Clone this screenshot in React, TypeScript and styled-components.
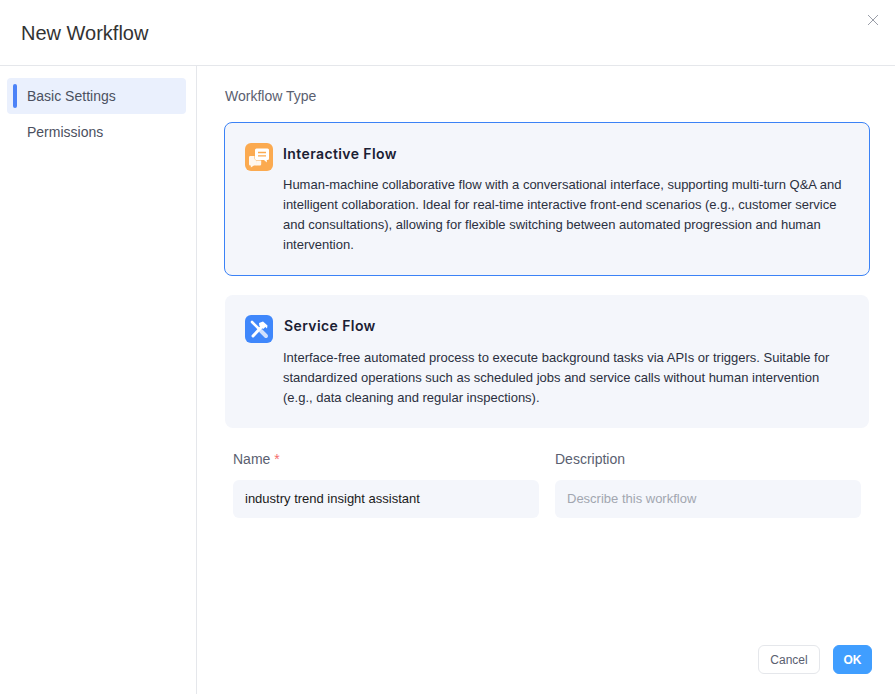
import React from "react";
import styled, { createGlobalStyle } from "styled-components";

const SANS = `"Liberation Sans", Arial, sans-serif`;

const Global = createGlobalStyle`
  html, body { margin: 0; padding: 0; background: #fff; }
  body { font-family: ${SANS}; }
  * { box-sizing: border-box; }
`;

const Dialog = styled.div`
  width: 895px;
  height: 694px;
  display: flex;
  flex-direction: column;
  position: relative;
  overflow: hidden;
  background: #fff;
`;

const Header = styled.header`
  height: 66px;
  flex: none;
  border-bottom: 1px solid #e5e7eb;
  padding: 21px 0 0 21px;
`;

const Title = styled.h1`
  margin: 0;
  font: 400 20px/24px ${SANS};
  color: #333;
`;

const Close = styled.button`
  position: absolute;
  top: 14px;
  right: 16px;
  width: 12px;
  height: 12px;
  padding: 0;
  border: 0;
  background: none;
  display: flex;
`;

const Body = styled.div`
  flex: 1;
  display: flex;
  min-height: 0;
`;

const Side = styled.nav`
  width: 197px;
  flex: none;
  border-right: 1px solid #e5e7eb;
  padding: 12px 10px 0 7px;
  display: flex;
  flex-direction: column;
`;

const NavItem = styled.div<{ $active?: boolean }>`
  height: 36px;
  position: relative;
  display: flex;
  align-items: center;
  padding-left: 20px;
  font: 400 14px/20px ${SANS};
  color: #4b5060;
  border-radius: 4px;
  background: ${(p) => (p.$active ? "#eaf0fd" : "transparent")};
  ${(p) =>
    p.$active &&
    `&::before {
      content: "";
      position: absolute;
      left: 6px;
      top: 6px;
      width: 4px;
      height: 24px;
      border-radius: 2px;
      background: #4c82f7;
    }`}
`;

const Main = styled.main`
  flex: 1;
  min-width: 0;
  padding: 22px 26px 0 28px;
  display: flex;
  flex-direction: column;
`;

const SectionLabel = styled.div`
  font: 400 14px/16px ${SANS};
  color: #5a6070;
  margin-bottom: 18px;
`;

const Card = styled.div<{ $selected?: boolean }>`
  background: #f4f6fb;
  border-radius: 8px;
  border: ${(p) => (p.$selected ? "1px solid #3b82f6" : "0")};
  padding: 20px 20px 0 20px;
  height: ${(p) => (p.$selected ? 154 : 133)}px;
  margin: ${(p) => (p.$selected ? "0 0 19px -1px" : "0")};
  width: ${(p) => (p.$selected ? 646 : 644)}px;
`;

const CardHead = styled.div<{ $gap: number }>`
  display: flex;
  align-items: flex-start;
  gap: ${(p) => p.$gap}px;
  height: 28px;
`;

const IconBox = styled.div<{ $tone: string }>`
  width: 28px;
  height: 28px;
  border-radius: 6px;
  background: ${(p) => p.$tone};
  display: flex;
  flex: none;
`;

const CardTitle = styled.div`
  font: 600 14px/22px Inter, ${SANS};
  letter-spacing: 0.4px;
  color: #1a2033;
`;

const CardText = styled.p<{ $top: number }>`
  margin: ${(p) => p.$top}px 0 0 38px;
  font: 400 13px/20px ${SANS};
  color: #2b3040;
`;

const FormRow = styled.div`
  display: grid;
  grid-template-columns: 306px 306px;
  gap: 16px;
  margin: 22px 0 0 8px;
`;

const Field = styled.div`
  display: flex;
  flex-direction: column;
`;

const Label = styled.label`
  font: 400 14px/18px ${SANS};
  color: #5a6070;
  margin-bottom: 12px;
`;

const Star = styled.span`
  color: #f56c6c;
  margin-left: 4px;
`;

const Input = styled.input`
  height: 38px;
  border: 0;
  outline: 0;
  border-radius: 6px;
  background: #f4f6fb;
  padding: 0 12px 2px;
  font: 400 13px ${SANS};
  color: #1a1a1a;
  &::placeholder { color: #a2a6b0; opacity: 1; }
`;

const Footer = styled.div`
  position: absolute;
  right: 23px;
  bottom: 20px;
  display: flex;
  gap: 13px;
`;

const Btn = styled.button<{ $primary?: boolean }>`
  height: 29px;
  padding: 0;
  width: ${(p) => (p.$primary ? 39 : 62)}px;
  border-radius: 6px;
  border: 1px solid ${(p) => (p.$primary ? "#409eff" : "#e5e7eb")};
  background: ${(p) => (p.$primary ? "#409eff" : "#fff")};
  color: ${(p) => (p.$primary ? "#fff" : "#5a6070")};
  font: ${(p) => (p.$primary ? 700 : 400)} 12px ${SANS};
`;

export default function App() {
  return (
    <Dialog>
      <Global />
      <Header>
        <Title>New Workflow</Title>
      </Header>
      <Close aria-label="close">
        <svg width="12" height="12" viewBox="0 0 12 12">
          <path d="M1 1l10 10M11 1L1 11" stroke="#9a9ea8" strokeWidth="1" fill="none" />
        </svg>
      </Close>
      <Body>
        <Side>
          <NavItem $active>Basic Settings</NavItem>
          <NavItem>Permissions</NavItem>
        </Side>
        <Main>
          <SectionLabel>Workflow Type</SectionLabel>
          <Card $selected>
            <CardHead $gap={10}>
              <IconBox $tone="#fbaa50">
                <svg width="28" height="28" viewBox="0 0 28 28">
                  <path d="M5.2 13h6v9.5H9L5.8 24.6V22.5h-.6A1.2 1.2 0 0 1 4 21.3v-7.1A1.2 1.2 0 0 1 5.2 13z" fill="#fff" opacity=".9" />
                  <path d="M11.2 16h5v5.3a1.2 1.2 0 0 1-1.2 1.2h-4z" fill="#fff" opacity=".9" />
                  <path d="M11.5 5.5h11A1.5 1.5 0 0 1 24 7v8.5a1.5 1.5 0 0 1-1.5 1.5h-.7v2.4L19 17h-7.5a1.5 1.5 0 0 1-1.5-1.5V7a1.5 1.5 0 0 1 1.5-1.5z" fill="#fff" stroke="#fbaa50" strokeWidth="1" paintOrder="stroke" />
                  <path d="M13 9.5h8M13 12.8h8" stroke="#fbaa50" strokeWidth="1.3" />
                </svg>
              </IconBox>
              <CardTitle>Interactive Flow</CardTitle>
            </CardHead>
            <CardText $top={4}>
              Human-machine collaborative flow with a conversational interface, supporting multi-turn Q&amp;A and
              intelligent collaboration. Ideal for real-time interactive front-end scenarios (e.g., customer service
              and consultations), allowing for flexible switching between automated progression and human
              intervention.
            </CardText>
          </Card>
          <Card>
            <CardHead $gap={11}>
              <IconBox $tone="#3f87fb">
                <svg width="28" height="28" viewBox="0 0 28 28">
                  <path d="M7 7l7 7" stroke="#fff" strokeWidth="2.6" strokeLinecap="round" />
                  <path d="M16 16l5 5" stroke="#cfe0fd" strokeWidth="4" strokeLinecap="round" />
                  <path d="M8 21l8.5-9" stroke="#fff" strokeWidth="3" strokeLinecap="round" />
                  <path d="M14 8l4-1.5 4.5 4-.5 3-1.6-1.4-2.2 2L14.4 11z" fill="#fff" />
                </svg>
              </IconBox>
              <CardTitle>Service Flow</CardTitle>
            </CardHead>
            <CardText $top={5}>
              Interface-free automated process to execute background tasks via APIs or triggers. Suitable for
              standardized operations such as scheduled jobs and service calls without human intervention
              (e.g., data cleaning and regular inspections).
            </CardText>
          </Card>
          <FormRow>
            <Field>
              <Label>
                Name<Star>*</Star>
              </Label>
              <Input defaultValue="industry trend insight assistant" />
            </Field>
            <Field>
              <Label>Description</Label>
              <Input placeholder="Describe this workflow" />
            </Field>
          </FormRow>
        </Main>
      </Body>
      <Footer>
        <Btn>Cancel</Btn>
        <Btn $primary>OK</Btn>
      </Footer>
    </Dialog>
  );
}
